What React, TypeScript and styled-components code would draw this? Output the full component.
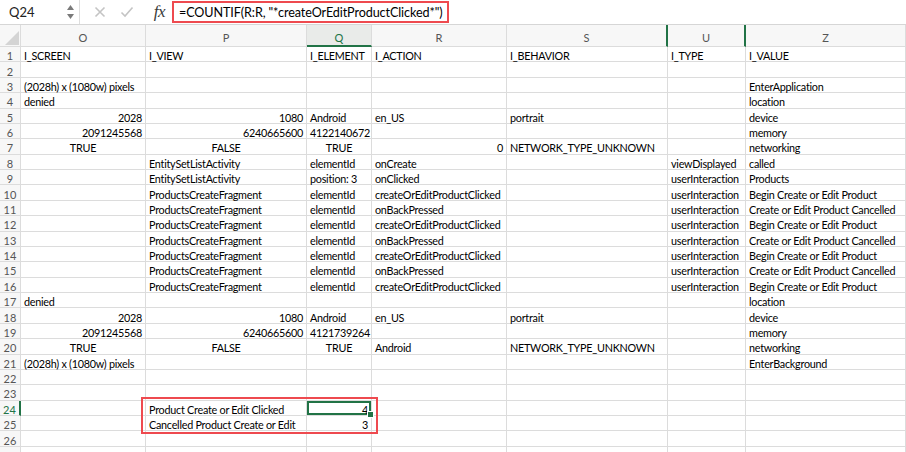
import React from "react";
import styled, { createGlobalStyle, css } from "styled-components";

const GlobalStyle = createGlobalStyle`
  html, body { margin: 0; padding: 0; background: #fff; }
  body { font-family: Lato, "Open Sans", sans-serif; overflow: hidden; }
`;

const GREEN = "#217346";
const RED = "#ee4a4f";
const GRID = "#dcdcdc";
const CELL_FONT = `Lato, "Noto Sans", sans-serif`;

const Page = styled.div`
  width: 906px;
  height: 452px;
  overflow: hidden;
  display: flex;
  flex-direction: column;
  background: #fff;
`;

const FormulaBar = styled.div`
  height: 24px;
  flex: none;
  display: flex;
  align-items: center;
  border-bottom: 1px solid #d6d6d6;
`;

const NameBox = styled.div`
  width: 80px;
  height: 100%;
  flex: none;
  display: flex;
  align-items: center;
  justify-content: space-between;
  padding: 0 5px 0 9px;
  box-sizing: border-box;
  border-right: 1px solid #dedede;
  font-family: ${CELL_FONT};
  font-size: 13px;
  color: #222;
`;

const Stepper = styled.div`
  display: flex;
  flex-direction: column;
  gap: 4px;
`;

const IconSlot = styled.div<{ $w: number; $end?: boolean }>`
  width: ${(p) => p.$w}px;
  height: 100%;
  flex: none;
  box-sizing: border-box;
  display: flex;
  align-items: center;
  justify-content: ${(p) => (p.$end ? "flex-end" : "center")};
  padding-right: ${(p) => (p.$end ? 7 : 0)}px;
`;

const Fx = styled.span`
  font-family: "Liberation Serif", "DejaVu Serif", serif;
  font-style: italic;
  font-size: 17px;
  color: #3a3a3a;
  letter-spacing: -0.5px;
`;

const FormulaInput = styled.div`
  width: 277px;
  height: 22px;
  flex: none;
  box-sizing: border-box;
  border: 2px solid ${RED};
  display: flex;
  align-items: center;
  padding-left: 5px;
  font-family: ${CELL_FONT};
  font-size: 12.6px;
  letter-spacing: -0.1px;
  color: #000;
  white-space: nowrap;
  overflow: hidden;
`;

const SheetWrap = styled.div`
  position: relative;
  flex: 1;
  overflow: hidden;
`;

const Sheet = styled.div`
  display: grid;
  grid-template-columns: 21px 125px 161px 65px 135px 161px 78px 160px;
  grid-template-rows: 22px repeat(27, 15.385px);
  font-family: ${CELL_FONT};
`;

const Corner = styled.div`
  position: relative;
  background: #f7f7f7;
  border-right: 1px solid ${GRID};
  border-bottom: 1px solid ${GRID};
  box-sizing: border-box;
  overflow: hidden;
  &::after {
    content: "";
    position: absolute;
    right: 1px;
    bottom: 1px;
    border-style: solid;
    border-width: 0 0 14px 14px;
    border-color: transparent transparent #d4d4d4 transparent;
  }
`;

const ColHeader = styled.div<{ $active?: boolean; $thickRight?: boolean }>`
  box-sizing: border-box;
  background: ${(p) => (p.$active ? "#e9ebe9" : "#f7f7f7")};
  border-right: ${(p) => (p.$thickRight ? `2px solid ${GREEN}` : `1px solid ${GRID}`)};
  border-bottom: ${(p) => (p.$active ? `2px solid ${GREEN}` : `1px solid ${GRID}`)};
  display: flex;
  align-items: center;
  justify-content: center;
  font-size: 11px;
  color: ${(p) => (p.$active ? GREEN : "#555")};
  padding-top: ${(p) => (p.$active ? 4 : 3)}px;
`;

const RowHeader = styled.div<{ $active?: boolean }>`
  box-sizing: border-box;
  background: #f7f7f7;
  border-right: ${(p) => (p.$active ? `2px solid ${GREEN}` : `1px solid ${GRID}`)};
  border-bottom: 1px solid ${GRID};
  display: flex;
  align-items: center;
  justify-content: center;
  padding-top: 3px;
  font-size: 11px;
  color: ${(p) => (p.$active ? GREEN : "#555")};
`;

type Align = "l" | "r" | "c";

const Cell = styled.div<{ $align: Align; $selected?: boolean }>`
  position: relative;
  box-sizing: border-box;
  border-right: 1px solid ${GRID};
  border-bottom: 1px solid ${GRID};
  display: flex;
  align-items: center;
  padding: 3px 3px 0;
  font-size: 10.8px;
  letter-spacing: -0.25px;
  color: #000;
  white-space: nowrap;
  overflow: visible;
  justify-content: ${(p) =>
    p.$align === "r" ? "flex-end" : p.$align === "c" ? "center" : "flex-start"};
  ${(p) =>
    p.$selected &&
    css`
      box-shadow: inset 0 0 0 2px ${GREEN};
      &::after {
        content: "";
        position: absolute;
        right: -3px;
        bottom: -3px;
        width: 5px;
        height: 5px;
        background: ${GREEN};
        border: 1px solid #fff;
        z-index: 2;
      }
    `}
`;

const Annotation = styled.div`
  position: absolute;
  left: 141px;
  top: 372px;
  width: 237px;
  height: 37px;
  box-sizing: border-box;
  border: 2px solid ${RED};
  pointer-events: none;
`;

type C = [string, Align] | null;

const L = (t: string): C => [t, "l"];
const R = (t: string): C => [t, "r"];
const M = (t: string): C => [t, "c"];
const E: C = null;

const begin = (): C[] => [E, L("ProductsCreateFragment"), L("elementId"), L("createOrEditProductClicked"), E, L("userInteraction"), L("Begin Create or Edit Product")];
const cancel = (): C[] => [E, L("ProductsCreateFragment"), L("elementId"), L("onBackPressed"), E, L("userInteraction"), L("Create or Edit Product Cancelled")];

const rows: C[][] = [
  [L("I_SCREEN"), L("I_VIEW"), L("I_ELEMENT"), L("I_ACTION"), L("I_BEHAVIOR"), L("I_TYPE"), L("I_VALUE")],
  [E, E, E, E, E, E, E],
  [L("(2028h) x (1080w) pixels"), E, E, E, E, E, L("EnterApplication")],
  [L("denied"), E, E, E, E, E, L("location")],
  [R("2028"), R("1080"), L("Android"), L("en_US"), L("portrait"), E, L("device")],
  [R("2091245568"), R("6240665600"), L("4122140672"), E, E, E, L("memory")],
  [M("TRUE"), M("FALSE"), M("TRUE"), R("0"), L("NETWORK_TYPE_UNKNOWN"), E, L("networking")],
  [E, L("EntitySetListActivity"), L("elementId"), L("onCreate"), E, L("viewDisplayed"), L("called")],
  [E, L("EntitySetListActivity"), L("position: 3"), L("onClicked"), E, L("userInteraction"), L("Products")],
  begin(),
  cancel(),
  begin(),
  cancel(),
  begin(),
  cancel(),
  begin(),
  [L("denied"), E, E, E, E, E, L("location")],
  [R("2028"), R("1080"), L("Android"), L("en_US"), L("portrait"), E, L("device")],
  [R("2091245568"), R("6240665600"), L("4121739264"), E, E, E, L("memory")],
  [M("TRUE"), M("FALSE"), M("TRUE"), L("Android"), L("NETWORK_TYPE_UNKNOWN"), E, L("networking")],
  [L("(2028h) x (1080w) pixels"), E, E, E, E, E, L("EnterBackground")],
  [E, E, E, E, E, E, E],
  [E, E, E, E, E, E, E],
  [E, L("Product Create or Edit Clicked"), R("4"), E, E, E, E],
  [E, L("Cancelled Product Create or Edit"), R("3"), E, E, E, E],
  [E, E, E, E, E, E, E],
  [E, E, E, E, E, E, E],
];

const letters = ["O", "P", "Q", "R", "S", "U", "Z"];

const CrossIcon = () => (
  <svg width="12" height="12" viewBox="0 0 12 12">
    <path d="M1.5 1.5 L10.5 10.5 M10.5 1.5 L1.5 10.5" stroke="#c4c4c4" strokeWidth="1.6" fill="none" />
  </svg>
);

const CheckIcon = () => (
  <svg width="14" height="12" viewBox="0 0 14 12">
    <path d="M1.5 6.5 L5 10 L12.5 1.5" stroke="#c4c4c4" strokeWidth="1.6" fill="none" />
  </svg>
);

const Tri = ({ up }: { up?: boolean }) => (
  <svg width="7" height="5" viewBox="0 0 7 5">
    <path d={up ? "M0 5 L3.5 0 L7 5 Z" : "M0 0 L7 0 L3.5 5 Z"} fill="#7a7a7a" />
  </svg>
);

export default function App() {
  return (
    <>
      <GlobalStyle />
      <Page>
        <FormulaBar>
          <NameBox>
            <span>Q24</span>
            <Stepper>
              <Tri up />
              <Tri />
            </Stepper>
          </NameBox>
          <IconSlot $w={40}>
            <CrossIcon />
          </IconSlot>
          <IconSlot $w={14}>
            <CheckIcon />
          </IconSlot>
          <IconSlot $w={38} $end>
            <Fx>fx</Fx>
          </IconSlot>
          <FormulaInput>=COUNTIF(R:R, "*createOrEditProductClicked*")</FormulaInput>
        </FormulaBar>
        <SheetWrap>
          <Sheet>
            <Corner />
            {letters.map((l, i) => (
              <ColHeader key={l} $active={l === "Q"} $thickRight={i === 4 || i === 5}>
                {l}
              </ColHeader>
            ))}
            {rows.map((r, ri) => (
              <React.Fragment key={ri}>
                <RowHeader $active={ri === 23}>{ri < 26 ? ri + 1 : ""}</RowHeader>
                {r.map((c, ci) => (
                  <Cell key={ci} $align={c ? c[1] : "l"} $selected={ri === 23 && ci === 2}>
                    {c ? c[0] : ""}
                  </Cell>
                ))}
              </React.Fragment>
            ))}
          </Sheet>
          <Annotation />
        </SheetWrap>
      </Page>
    </>
  );
}
